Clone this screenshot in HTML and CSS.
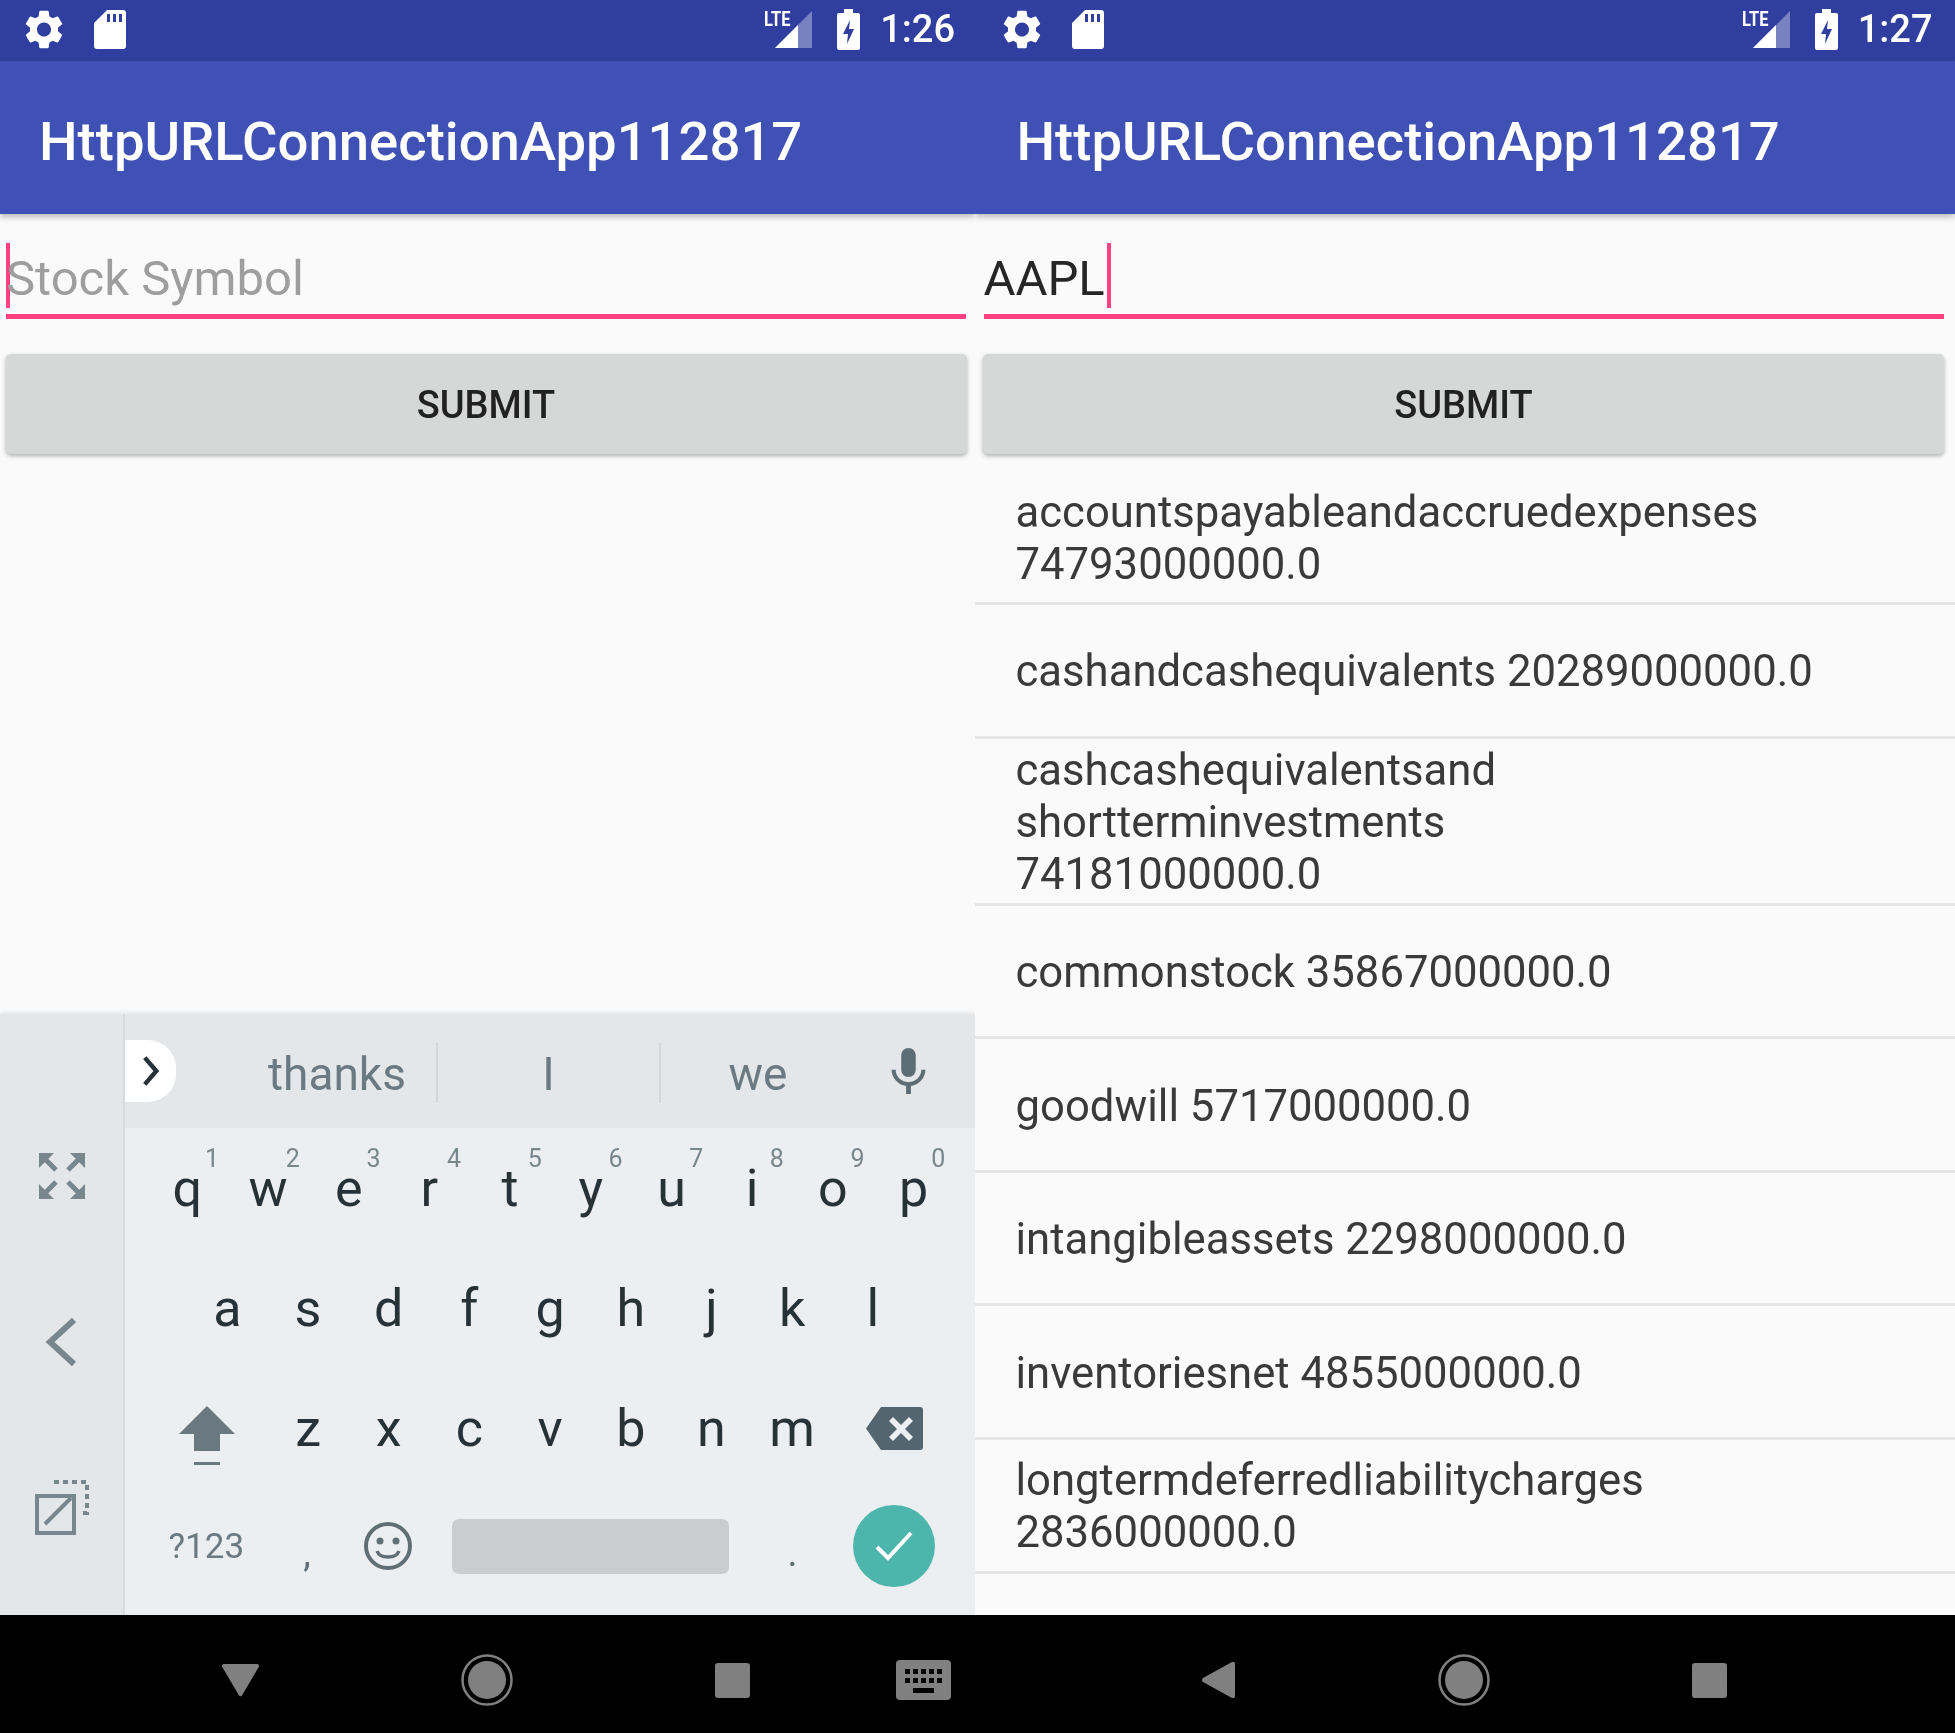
FILE: index.html
```html
<!DOCTYPE html>
<html lang="en">
<head>
    <meta charset="UTF-8">
    <meta name="viewport" content="width=device-width, initial-scale=1.0">
    <title>HttpURLConnectionApp112817</title>
    <link rel="stylesheet" href="styles.css">
</head>
<body>
    <svg class="icon-defs" aria-hidden="true">
        <symbol id="i-gear" viewBox="2.5 2 19 20"><path fill="currentColor" d="M19.14 12.94c.04-.3.06-.61.06-.94 0-.32-.02-.64-.07-.94l2.03-1.58c.18-.14.23-.41.12-.61l-1.92-3.32c-.12-.22-.37-.29-.59-.22l-2.39.96c-.5-.38-1.03-.7-1.62-.94l-.36-2.54c-.04-.24-.24-.41-.48-.41h-3.84c-.24 0-.43.17-.47.41l-.36 2.54c-.59.24-1.13.57-1.62.94l-2.39-.96c-.22-.08-.47 0-.59.22L2.74 8.87c-.12.21-.08.47.12.61l2.03 1.58c-.05.3-.09.63-.09.94s.02.64.07.94l-2.03 1.58c-.18.14-.23.41-.12.61l1.92 3.32c.12.22.37.29.59.22l2.39-.96c.5.38 1.03.7 1.62.94l.36 2.54c.05.24.24.41.48.41h3.84c.24 0 .44-.17.47-.41l.36-2.54c.59-.24 1.13-.56 1.62-.94l2.39.96c.22.08.47 0 .59-.22l1.92-3.32c.12-.22.07-.47-.12-.61l-2.01-1.58zM12 15.6c-1.98 0-3.6-1.62-3.6-3.6s1.62-3.6 3.6-3.6 3.6 1.62 3.6 3.6-1.62 3.6-3.6 3.6z"/></symbol>
        <symbol id="i-sd" viewBox="0 0 32 39"><path fill="currentColor" fill-rule="evenodd" d="M13 0h16a3 3 0 0 1 3 3v33a3 3 0 0 1-3 3H3a3 3 0 0 1-3-3V13zM13 4v8h3V4zM19 4v8h3V4zM25 4v8h3V4z"/></symbol>
        <symbol id="i-signal" viewBox="0 0 37 37"><path fill="currentColor" opacity=".35" d="M37 0v37H0z"/><path fill="currentColor" d="M23 14v23H0z"/></symbol>
        <symbol id="i-battery" viewBox="0 0 23 41"><path fill="currentColor" fill-rule="evenodd" d="M7 0h9v4h5a2 2 0 0 1 2 2v33a2 2 0 0 1-2 2H2a2 2 0 0 1-2-2V6a2 2 0 0 1 2-2h5zM13 11l-7 14h5l-1 10 7-15h-5z"/></symbol>
        <symbol id="i-home" viewBox="0 0 52 52"><circle cx="26" cy="26" r="24.500" fill="none" stroke="currentColor" stroke-width="2.500"/><circle cx="26" cy="26" r="19" fill="currentColor"/></symbol>
    </svg>

    <div class="screen">
        <div class="status-bar">
            <svg class="st-gear"><use href="#i-gear"/></svg>
            <svg class="st-sd"><use href="#i-sd"/></svg>
            <div class="status-right">
                <div class="st-signal">
                    <span class="st-lte">LTE</span>
                    <svg class="st-bars"><use href="#i-signal"/></svg>
                </div>
                <svg class="st-battery"><use href="#i-battery"/></svg>
                <span class="st-time">1:26</span>
            </div>
        </div>
        <div class="app-bar">HttpURLConnectionApp112817</div>
        <div class="content">
            <div class="field">
                <span class="caret caret-first"></span>
                <span class="field-hint">Stock Symbol</span>
            </div>
            <button class="submit">SUBMIT</button>
        </div>
        <div class="keyboard">
            <div class="kb-side">
                <svg class="side-icon" viewBox="0 0 56 56"><g fill="none" stroke="currentColor" stroke-width="5"><path d="M12 12l10 10M34 22l10-10M12 44l10-10M44 44L34 34"/></g><path fill="currentColor" d="M5 5h15L5 20zM51 5v15L36 5zM5 51V36l15 15zM51 51H36l15-15z"/></svg>
                <svg class="side-icon" viewBox="0 0 56 56"><path fill="none" stroke="currentColor" stroke-width="6" d="M40 6L16 28l24 22"/></svg>
                <svg class="side-icon" viewBox="0 0 56 56"><g fill="none" stroke="currentColor" stroke-width="4"><path d="M28 16H3v37h37V29"/><path d="M11 44l26-26M22 16h18v18"/><path stroke-dasharray="5 4" d="M20 2h33v31h-6"/></g></svg>
            </div>
            <div class="kb-main">
                <div class="suggest">
                    <div class="suggest-tab">
                        <svg class="tab-chevron" viewBox="0 0 20 36"><path fill="none" stroke="currentColor" stroke-width="5" d="M3 3l13 15L3 33"/></svg>
                    </div>
                    <span class="word word-1">thanks</span>
                    <span class="word word-2">I</span>
                    <span class="word word-3">we</span>
                    <svg class="mic" viewBox="5 2 14 19"><path fill="currentColor" d="M12 14c1.66 0 2.99-1.34 2.99-3L15 5c0-1.66-1.34-3-3-3S9 3.34 9 5v6c0 1.66 1.34 3 3 3zm5.3-3c0 3-2.54 5.1-5.3 5.1S6.7 14 6.7 11H5c0 3.41 2.72 6.23 6 6.72V21h2v-3.28c3.28-.48 6-3.3 6-6.72h-1.7z"/></svg>
                </div>
                <div class="key-row row-1">
                    <span class="key">q<sup class="hint">1</sup></span>
                    <span class="key">w<sup class="hint">2</sup></span>
                    <span class="key">e<sup class="hint">3</sup></span>
                    <span class="key">r<sup class="hint">4</sup></span>
                    <span class="key">t<sup class="hint">5</sup></span>
                    <span class="key">y<sup class="hint">6</sup></span>
                    <span class="key">u<sup class="hint">7</sup></span>
                    <span class="key">i<sup class="hint">8</sup></span>
                    <span class="key">o<sup class="hint">9</sup></span>
                    <span class="key">p<sup class="hint">0</sup></span>
                </div>
                <div class="key-row row-2">
                    <span class="key">a</span>
                    <span class="key">s</span>
                    <span class="key">d</span>
                    <span class="key">f</span>
                    <span class="key">g</span>
                    <span class="key">h</span>
                    <span class="key">j</span>
                    <span class="key">k</span>
                    <span class="key">l</span>
                </div>
                <div class="key-row row-3">
                    <span class="key key-shift">
                        <svg class="shift" viewBox="0 0 56 60"><path fill="currentColor" d="M28 0l28 28H41v17H15V28H0zM15 56h26v3H15z"/></svg>
                    </span>
                    <span class="key">z</span>
                    <span class="key">x</span>
                    <span class="key">c</span>
                    <span class="key">v</span>
                    <span class="key">b</span>
                    <span class="key">n</span>
                    <span class="key">m</span>
                    <span class="key key-del">
                        <svg class="del" viewBox="0 0 57 43"><path fill="currentColor" fill-rule="evenodd" d="M15 0h39a3 3 0 0 1 3 3v37a3 3 0 0 1-3 3H15L0 21.500zM27 10l-4 4 8 8-8 8 4 4 8-8 8 8 4-4-8-8 8-8-4-4-8 8z"/></svg>
                    </span>
                </div>
                <div class="key-row row-4">
                    <span class="key key-sym">?123</span>
                    <span class="key key-punct key-comma">,</span>
                    <span class="key key-emoji">
                        <svg class="emoji" viewBox="0 0 48 48"><circle cx="24" cy="24" r="22" fill="none" stroke="currentColor" stroke-width="4"/><circle cx="16" cy="19" r="3.500" fill="currentColor"/><circle cx="32" cy="19" r="3.500" fill="currentColor"/><path fill="none" stroke="currentColor" stroke-width="3.500" d="M13 29c3 8 19 8 22 0"/></svg>
                    </span>
                    <span class="space-bar"></span>
                    <span class="key key-punct key-dot">.</span>
                    <span class="done">
                        <svg class="done-check" viewBox="0 0 40 32"><path fill="none" stroke="currentColor" stroke-width="4" d="M3 17l11 11L37 3"/></svg>
                    </span>
                </div>
            </div>
        </div>
        <div class="nav-bar">
            <svg class="nav-down" viewBox="0 0 37 33"><path fill="currentColor" d="M2 0h33a2 2 0 0 1 2 2.500L20 31.500a2 2 0 0 1-3 0L0 2.500A2 2 0 0 1 2 0z"/></svg>
            <svg class="nav-home"><use href="#i-home"/></svg>
            <span class="nav-square"></span>
            <svg class="nav-keys" viewBox="0 0 55 40"><path fill="currentColor" fill-rule="evenodd" d="M4 0h47a4 4 0 0 1 4 4v32a4 4 0 0 1-4 4H4a4 4 0 0 1-4-4V4a4 4 0 0 1 4-4zM9 9v5h5V9zM17 9v5h5V9zM25 9v5h5V9zM33 9v5h5V9zM41 9v5h5V9zM9 18v5h5v-5zM17 18v5h5v-5zM25 18v5h5v-5zM33 18v5h5v-5zM41 18v5h5v-5zM17 28v5h21v-5z"/></svg>
        </div>
    </div>

    <div class="screen screen-right">
        <div class="status-bar">
            <svg class="st-gear"><use href="#i-gear"/></svg>
            <svg class="st-sd"><use href="#i-sd"/></svg>
            <div class="status-right">
                <div class="st-signal">
                    <span class="st-lte">LTE</span>
                    <svg class="st-bars"><use href="#i-signal"/></svg>
                </div>
                <svg class="st-battery"><use href="#i-battery"/></svg>
                <span class="st-time">1:27</span>
            </div>
        </div>
        <div class="app-bar">HttpURLConnectionApp112817</div>
        <div class="content">
            <div class="field">
                <span class="field-value">AAPL</span>
                <span class="caret"></span>
            </div>
            <button class="submit">SUBMIT</button>
            <ul class="stock-list">
                <li><span>accountspayableandaccruedexpenses 74793000000.0</span></li>
                <li><span>cashandcashequivalents 20289000000.0</span></li>
                <li><span>cashcashequivalentsand<br>shortterminvestments<br>74181000000.0</span></li>
                <li><span>commonstock 35867000000.0</span></li>
                <li><span>goodwill 5717000000.0</span></li>
                <li><span>intangibleassets 2298000000.0</span></li>
                <li><span>inventoriesnet 4855000000.0</span></li>
                <li><span>longtermdeferredliabilitycharges 2836000000.0</span></li>
            </ul>
        </div>
        <div class="nav-bar nav-bar-plain">
            <svg class="nav-back" viewBox="0 0 33 36"><path fill="currentColor" d="M30 0a2 2 0 0 1 3 2v32a2 2 0 0 1-3 2L1 20a2.500 2.500 0 0 1 0-4z"/></svg>
            <svg class="nav-home"><use href="#i-home"/></svg>
            <span class="nav-square"></span>
        </div>
    </div>
</body>
</html>
```

FILE: styles.css
```css
* {
    box-sizing: border-box;
}
body {
    margin: 0;
    display: grid;
    grid-template-columns: 975px 980px;
    height: 1733px;
    overflow: hidden;
    font-family: Roboto, "Liberation Sans", sans-serif;
    background-color: #fafafa;
}
.icon-defs {
    display: none;
}
.screen {
    --inset: 0px;
    display: flex;
    flex-direction: column;
    height: 1733px;
    min-width: 0;
    overflow: hidden;
    background-color: #fafafa;
    filter: blur(0.4px);
}
.screen-right {
    --inset: 2.5px;
}

/* status bar */
.status-bar {
    display: flex;
    align-items: center;
    flex: none;
    height: 61px;
    padding: 0 calc(20px + var(--inset)) 3px calc(25px + var(--inset));
    background-color: #303f9f;
    color: #fff;
}
.st-gear {
    width: 38px;
    height: 39px;
}
.st-sd {
    width: 32px;
    height: 39px;
    margin-left: 31px;
}
.status-right {
    display: flex;
    align-items: center;
    margin-left: auto;
}
.st-signal {
    position: relative;
    width: 49px;
    height: 37px;
}
.st-bars {
    position: absolute;
    right: 0;
    top: 0;
    width: 37px;
    height: 37px;
}
.st-lte {
    position: absolute;
    left: 1px;
    top: -4px;
    font-size: 20px;
    font-weight: 700;
    transform: scaleX(0.82);
    transform-origin: left;
}
.st-battery {
    width: 23px;
    height: 41px;
    margin-left: 25px;
}
.st-time {
    margin-left: 20px;
    font-size: 38px;
    font-weight: 500;
}

/* app bar */
.app-bar {
    position: relative;
    display: flex;
    align-items: center;
    flex: none;
    height: 153px;
    padding: 6px 0 0 calc(39px + var(--inset));
    background-color: #3f51b5;
    color: #fff;
    font-size: 54.450px;
    font-weight: 500;
    box-shadow: 0 3px 6px rgba(0, 0, 0, 0.25);
}

/* form */
.content {
    flex: 1;
    min-height: 0;
    overflow: hidden;
}
.field {
    display: flex;
    align-items: center;
    height: 85px;
    margin: 20px calc(9px + var(--inset)) 0 calc(6px + var(--inset));
    padding-top: 2px;
    border-bottom: 5px solid #ff4081;
    font-size: 49px;
}
.field-hint {
    padding-top: 6px;
    color: #9e9e9e;
}
.field-value {
    padding-top: 6px;
    color: #262626;
}
.caret {
    flex: none;
    width: 4px;
    height: 65px;
    margin-left: 2px;
    background-color: #ff4081;
}
.caret-first {
    margin-left: 0;
    margin-right: -4px;
}
.submit {
    display: block;
    width: 961px;
    height: 100px;
    margin: 35px 0 0 calc(5.500px + var(--inset));
    padding-top: 3px;
    border: none;
    border-radius: 5px;
    background-color: #d6d7d7;
    color: #212121;
    font-family: inherit;
    font-size: 38px;
    font-weight: 500;
    box-shadow: 0 2px 4px rgba(0, 0, 0, 0.3);
}

/* results list */
.stock-list {
    list-style-type: none;
    margin: 17.500px 0 0;
    padding: 0;
}
.stock-list li {
    display: flex;
    align-items: center;
    min-height: 133.600px;
    padding: 6px 110px 2px 40.500px;
    border-bottom: 3px solid #e6e6e6;
    color: #3a3a3a;
    font-size: 43.650px;
    line-height: 52px;
}

/* keyboard */
.keyboard {
    display: flex;
    flex: none;
    height: 601px;
    background-color: #eceff1;
    box-shadow: 0 -2px 4px rgba(0, 0, 0, 0.08);
}
.kb-side {
    display: flex;
    flex-direction: column;
    align-items: center;
    flex: none;
    gap: 110px;
    width: 125px;
    padding: 134px 0 0;
    background-color: #e4e7ea;
    border-right: 2px solid #d8dcdf;
    color: #78868e;
}
.side-icon {
    width: 56px;
    height: 56px;
}
.kb-main {
    flex: 1;
    min-width: 0;
}
.suggest {
    display: flex;
    align-items: center;
    height: 114px;
    background-color: #e4e7ea;
    color: #6b7a82;
    font-size: 46px;
}
.suggest-tab {
    display: flex;
    align-items: center;
    justify-content: center;
    flex: none;
    width: 51px;
    height: 62px;
    border-radius: 0 28px 28px 0;
    background-color: #fff;
    color: #263238;
}
.tab-chevron {
    width: 18px;
    height: 32px;
}
.word {
    display: flex;
    align-items: center;
    justify-content: center;
    flex: none;
    height: 60px;
    margin-top: 3px;
    padding-top: 3px;
}
.word-1 {
    width: 200px;
    margin-left: 62px;
    border-right: 2px solid #d3d7da;
}
.word-2 {
    width: 223px;
    border-right: 2px solid #d3d7da;
}
.word-3 {
    width: 194px;
}
.mic {
    flex: none;
    width: 35px;
    height: 46px;
    margin-left: 36px;
    color: #5d6d75;
}
.key-row {
    display: flex;
    align-items: center;
    height: 120px;
    color: #263238;
    font-size: 52px;
}
.row-1 {
    padding-left: 22px;
}
.row-2 {
    padding-left: 62px;
}
.row-3 {
    padding-left: 42px;
}
.row-4 {
    margin-top: -2px;
    padding-left: 41px;
}
.key {
    position: relative;
    flex: none;
    width: 80.700px;
    text-align: center;
}
.hint {
    position: absolute;
    left: 58px;
    top: -14px;
    color: #78868e;
    font-size: 25px;
    line-height: 30px;
}
.key-shift {
    display: flex;
    justify-content: center;
    margin-right: 20px;
    padding-top: 16px;
    color: #6a7980;
}
.shift {
    width: 56px;
    height: 60px;
}
.key-del {
    display: flex;
    justify-content: center;
    margin-left: 22px;
    color: #546570;
}
.del {
    width: 57px;
    height: 43px;
}
.key-sym {
    margin-right: 20px;
    color: #6b7a82;
    font-size: 35px;
}
.key-punct {
    padding-top: 14px;
    color: #5f6d75;
    font-size: 38px;
}
.key-emoji {
    display: flex;
    justify-content: center;
    color: #606e75;
}
.emoji {
    width: 48px;
    height: 48px;
}
.space-bar {
    flex: none;
    width: 277px;
    height: 55px;
    margin-left: 24px;
    border-radius: 7px;
    background-color: #c9cdd0;
}
.key-dot {
    margin-left: 23px;
}
.done {
    display: flex;
    align-items: center;
    justify-content: center;
    flex: none;
    width: 82px;
    height: 82px;
    margin-left: 20px;
    border-radius: 50%;
    background-color: #4db6ac;
    color: #fff;
}
.done-check {
    width: 40px;
    height: 32px;
}

/* navigation bar */
.nav-bar {
    flex: none;
    display: flex;
    align-items: center;
    height: 118px;
    padding: 12px 0 0 222px;
    background-color: #000;
    color: #808080;
}
.nav-bar-plain {
    padding-left: 226.500px;
}
.nav-down {
    flex: none;
    width: 37px;
    height: 33px;
}
.nav-back {
    flex: none;
    width: 33px;
    height: 36px;
}
.nav-home {
    flex: none;
    width: 52px;
    height: 52px;
    margin-left: 202px;
}
.nav-bar-plain .nav-home {
    margin-left: 203px;
}
.nav-square {
    flex: none;
    width: 35px;
    height: 35px;
    margin-left: 202px;
    border-radius: 3px;
    background-color: #808080;
}
.nav-keys {
    flex: none;
    width: 55px;
    height: 40px;
    margin-left: 146px;
}
```
